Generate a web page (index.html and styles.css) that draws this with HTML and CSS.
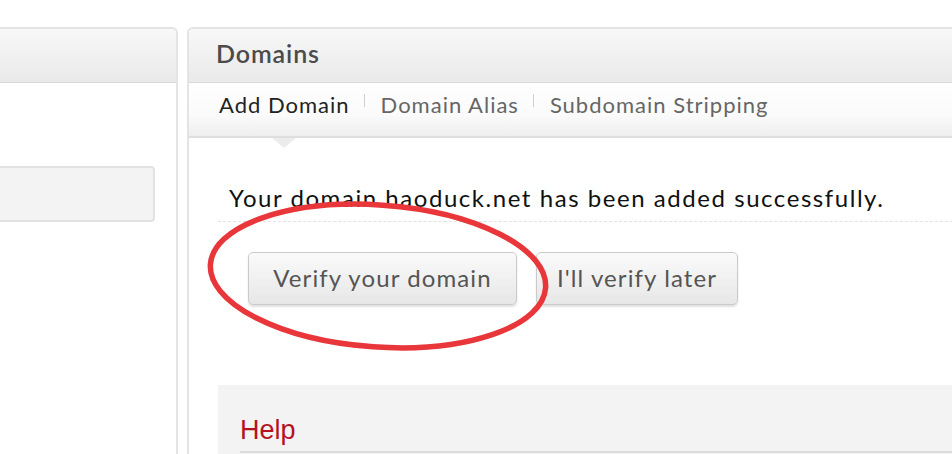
FILE: index.html
```html
<!DOCTYPE html>
<html>
<head>
<meta charset="utf-8">
<link rel="stylesheet" href="styles.css">
</head>
<body>
<div class="page">
  <div class="panel side">
    <div class="panel-head"></div>
    <div class="side-body">
      <div class="field"></div>
    </div>
  </div>
  <div class="panel main">
    <div class="panel-head"><h2 class="title">Domains</h2></div>
    <div class="tabs">
      <span class="tab active">Add Domain</span>
      <span class="sep"></span>
      <span class="tab">Domain Alias</span>
      <span class="sep"></span>
      <span class="tab">Subdomain Stripping</span>
    </div>
    <div class="content">
      <p class="msg">Your domain haoduck.net has been added successfully.</p>
      <div class="actions">
        <button class="btn btn-verify">Verify your domain</button>
        <button class="btn btn-later">I'll verify later</button>
        <svg class="circle" viewBox="0 0 360 160">
          <ellipse cx="180" cy="80" rx="168" ry="71" transform="rotate(4 180 80)" fill="none" stroke="#e8363a" stroke-width="5.5"/>
        </svg>
      </div>
      <div class="help">
        <h3 class="help-title">Help</h3>
        <div class="help-rule"></div>
      </div>
    </div>
  </div>
</div>
</body>
</html>
```

FILE: styles.css
```css
html, body {
  margin: 0;
  padding: 0;
  background: #fff;
  overflow: hidden;
  height: 454px;
}
body {
  font-family: "Lato", "Open Sans", sans-serif;
}
.page {
  display: flex;
  gap: 9px;
  padding-top: 27px;
  margin-left: -30px;
  width: 1040px;
  height: 427px;
  overflow: hidden;
}
.panel {
  border: 2px solid #e4e4e4;
  border-bottom: none;
  border-radius: 6px 6px 0 0;
  background: #fff;
  display: flex;
  flex-direction: column;
  overflow: hidden;
}
.panel > * {
  flex-shrink: 0;
}
.side {
  width: 204px;
}
.main {
  flex: 1;
}
.panel-head {
  height: 53px;
  background: linear-gradient(#f8f8f8, #e9e9e9);
  border-bottom: 1px solid #d9d9d9;
  border-radius: 4px 4px 0 0;
  display: flex;
  align-items: center;
  padding-left: 27px;
}
.title {
  margin: 0 0 5px 0;
  font-size: 25px;
  font-weight: 600;
  color: #4b4b4b;
  letter-spacing: 0.9px;
}
.side-body {
  padding-top: 83px;
}
.field {
  margin-right: 21px;
  height: 52px;
  background: #f3f3f3;
  border: 2px solid #e2e2e2;
  border-left: none;
  border-radius: 0 4px 4px 0;
}
.tabs {
  background: linear-gradient(#fefefe 0%, #fbfbfb 60%, #eeeeee 100%);
  border-bottom: 2px solid #dedede;
  display: flex;
  align-items: center;
  padding-left: 30px;
  padding-bottom: 11px;
  box-sizing: border-box;
  height: 55px;
  position: relative;
}
.tabs::after {
  content: "";
  position: absolute;
  left: 83px;
  bottom: -12px;
  border-left: 12px solid transparent;
  border-right: 12px solid transparent;
  border-top: 10px solid #ececec;
}
.tab {
  font-size: 22px;
  color: #666;
  letter-spacing: 1px;
}
.tab.active {
  color: #222;
}
.sep {
  width: 1px;
  height: 13px;
  background: #cfcfcf;
  margin: -7px 16px 0 14px;
}
.content {
  padding-left: 29px;
}
.msg {
  margin: 45px 0 0 0;
  padding: 0 0 8px 11px;
  font-size: 24px;
  line-height: 30px;
  color: #111;
  letter-spacing: 1.55px;
  border-bottom: 1px dashed #e2e2e2;
}
.actions {
  position: relative;
  display: flex;
  gap: 19px;
  margin: 30px 0 0 30px;
}
.btn {
  height: 53px;
  font-family: "Lato", "Open Sans", sans-serif;
  font-size: 24px;
  letter-spacing: 1.1px;
  color: #555;
  background: linear-gradient(#fafafa, #e7e7e7);
  border: 1px solid #cacaca;
  border-radius: 5px;
  box-shadow: 0 2px 2px rgba(0,0,0,0.12);
  padding: 0 0 2px 0;
}
.btn-verify { width: 269px; }
.btn-later { width: 202px; }
.circle {
  position: absolute;
  left: -50px;
  top: -56px;
  width: 360px;
  height: 160px;
  pointer-events: none;
}
.help {
  margin-top: 80px;
  background: #f3f3f3;
  padding: 30px 0 0 22px;
  height: 60px;
}
.help-title {
  margin: 0;
  font-family: "Liberation Sans", Arial, sans-serif;
  font-weight: normal;
  font-size: 27px;
  line-height: 30px;
  color: #b5121f;
}
.help-rule {
  margin-top: 6px;
  height: 2px;
  background: #dcdcdc;
}
```
